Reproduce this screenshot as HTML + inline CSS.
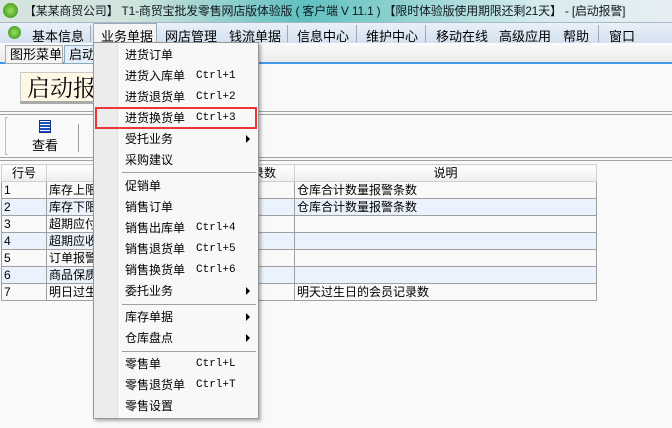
<!DOCTYPE html><html><head><meta charset="utf-8"><style>
*{margin:0;padding:0;box-sizing:border-box}
body{width:672px;height:428px;overflow:hidden;background:#f9f9f9;font-family:"Liberation Sans","Noto Sans CJK SC",sans-serif;font-size:12px;color:#000;position:relative}
.a{position:absolute;white-space:nowrap}
.title{left:0;top:0;width:672px;height:22px;background:linear-gradient(90deg,#d8e4e0 0%,#cfe3dd 20%,#5fc0c0 45%,#8fd3cf 60%,#d7ecef 80%,#e6eef3 100%);font-size:12px;line-height:22px;color:#101820}
.menubar{left:0;top:22px;width:672px;height:21px;background:linear-gradient(#e9f0f8,#d3e1f0);border-top:1px solid #a8b8c8}
.mi{position:absolute;top:3px;font-size:13px}
.sep{position:absolute;top:2px;width:1px;height:17px;background:#a0a8b0}
.tabs{left:0;top:43px;width:672px;height:21px;background:linear-gradient(#fafafa,#ececec);border-bottom:2px solid #3f9be8}
.menu{left:93px;top:42px;width:166px;height:377px;background:#f8f8f8;border:1px solid #979797;box-shadow:2px 2px 3px rgba(0,0,0,.3)}
.gut{position:absolute;left:0;top:0;width:24px;height:100%;background:#ececec;border-right:1px solid #e0e0e0}
.it{position:absolute;left:31px;font-size:12px;height:21px;line-height:21px}
.sc{position:absolute;left:102px;font-family:"Liberation Mono",monospace;font-size:11px;line-height:21px}
.arr{position:absolute;left:152px;width:0;height:0;border-left:4px solid #000;border-top:4px solid transparent;border-bottom:4px solid transparent}
.ms{position:absolute;left:28px;width:134px;height:1px;background:#a0a0a0}
table{border-collapse:collapse;position:absolute;left:1px;top:164px}
td{border:1px solid #a0a0a0;height:17px;padding:0 2px;font-size:12px;line-height:15px}
tr.h td{background:linear-gradient(#fff,#eee);border-color:#d0d0d0;text-align:center}
tr.b td{background:#eaf2fd}
</style></head><body>
<div class="a title"><span style="position:absolute;left:3px;top:3px;width:15px;height:15px;border-radius:50%;background:radial-gradient(#9be05a,#2d8a17)"></span><span style="position:absolute;left:24px;letter-spacing:-0.2px">【某某商贸公司】 T1-商贸宝批发零售网店版体验版 ( 客户端 V 11.1 ) 【限时体验版使用期限还剩21天】 - [启动报警]</span></div>
<div class="a menubar">
<span style="position:absolute;left:8px;top:3px;width:13px;height:13px;border-radius:50%;background:radial-gradient(#9be05a,#2d8a17)"></span>
<span class="mi" style="left:32px">基本信息</span><span class="sep" style="left:90px"></span>
<span style="position:absolute;left:93px;top:0;width:64px;height:21px;background:#f4f4f4;border:1px solid #9ab"></span>
<span class="mi" style="left:101px">业务单据</span>
<span class="mi" style="left:165px">网店管理</span>
<span class="mi" style="left:229px">钱流单据</span><span class="sep" style="left:287px"></span>
<span class="mi" style="left:297px">信息中心</span><span class="sep" style="left:356px"></span>
<span class="mi" style="left:366px">维护中心</span><span class="sep" style="left:425px"></span>
<span class="mi" style="left:436px">移动在线</span>
<span class="mi" style="left:499px">高级应用</span>
<span class="mi" style="left:563px">帮助</span><span class="sep" style="left:598px"></span>
<span class="mi" style="left:609px">窗口</span>
</div>
<div class="a tabs">
<span style="position:absolute;left:5px;top:2px;width:58px;height:19px;border:1px solid #aaa;background:#f4f4f4;padding-left:4px;line-height:17px;font-size:13px">图形菜单</span>
<span style="position:absolute;left:64px;top:2px;width:40px;height:19px;border:1px solid #8ab;background:#e4eef8;padding-left:4px;line-height:17px;font-size:13px">启动</span>
</div>
<div class="a" style="left:20px;top:72px;width:80px;height:32px;background:#fff8e6;border:1px solid #c8c8c8;border-bottom:3px solid #aaa;font-family:'Noto Serif CJK SC',serif;font-size:23px;line-height:28px;padding-left:6px">启动报警</div>
<div class="a" style="left:0;top:111px;width:672px;height:4px;border-top:1px solid #a0a0a0;border-bottom:1px solid #a0a0a0"></div>
<div class="a" style="left:5px;top:117px;width:3px;height:38px;border:1px solid #bbb;border-right:none"></div>
<div class="a" style="left:39px;top:120px;width:12px;height:13px;background:repeating-linear-gradient(#fff 0 1px,#1a4fc0 1px 3px);border:1px solid #0c2f8a"></div>
<div class="a" style="left:32px;top:135px;font-size:13px">查看</div>
<div class="a" style="left:78px;top:124px;width:1px;height:28px;background:#999"></div>
<div class="a" style="left:0;top:157px;width:672px;height:4px;border-top:1px solid #a0a0a0;border-bottom:1px solid #a0a0a0"></div>
<table>
<tr class="h"><td style="width:45px">行号</td><td style="width:205px"></td><td style="width:43px;text-align:left;padding-left:0">录数</td><td style="width:302px">说明</td></tr>
<tr><td>1</td><td>库存上限</td><td></td><td>仓库合计数量报警条数</td></tr>
<tr class="b"><td>2</td><td>库存下限</td><td></td><td>仓库合计数量报警条数</td></tr>
<tr><td>3</td><td>超期应付</td><td></td><td></td></tr>
<tr class="b"><td>4</td><td>超期应收</td><td></td><td></td></tr>
<tr><td>5</td><td>订单报警</td><td></td><td></td></tr>
<tr class="b"><td>6</td><td>商品保质</td><td></td><td></td></tr>
<tr><td>7</td><td>明日过生</td><td></td><td>明天过生日的会员记录数</td></tr>
</table>
<div class="a menu"><div class="gut"></div>
<div class="it" style="top:2px">进货订单</div>
<div class="it" style="top:23px">进货入库单</div><div class="sc" style="top:23px">Ctrl+1</div>
<div class="it" style="top:44px">进货退货单</div><div class="sc" style="top:44px">Ctrl+2</div>
<div style="position:absolute;left:1px;top:64px;width:162px;height:22px;border:2px solid #ee3535"></div>
<div class="it" style="top:65px">进货换货单</div><div class="sc" style="top:65px">Ctrl+3</div>
<div class="it" style="top:86px">受托业务</div><div class="arr" style="top:92px"></div>
<div class="it" style="top:107px">采购建议</div>
<div class="ms" style="top:129px"></div>
<div class="it" style="top:133px">促销单</div>
<div class="it" style="top:154px">销售订单</div>
<div class="it" style="top:175px">销售出库单</div><div class="sc" style="top:175px">Ctrl+4</div>
<div class="it" style="top:196px">销售退货单</div><div class="sc" style="top:196px">Ctrl+5</div>
<div class="it" style="top:217px">销售换货单</div><div class="sc" style="top:217px">Ctrl+6</div>
<div class="it" style="top:238px">委托业务</div><div class="arr" style="top:244px"></div>
<div class="ms" style="top:261px"></div>
<div class="it" style="top:264px">库存单据</div><div class="arr" style="top:270px"></div>
<div class="it" style="top:285px">仓库盘点</div><div class="arr" style="top:291px"></div>
<div class="ms" style="top:308px"></div>
<div class="it" style="top:311px">零售单</div><div class="sc" style="top:311px">Ctrl+L</div>
<div class="it" style="top:332px">零售退货单</div><div class="sc" style="top:332px">Ctrl+T</div>
<div class="it" style="top:353px">零售设置</div>
</div>
</body></html>
